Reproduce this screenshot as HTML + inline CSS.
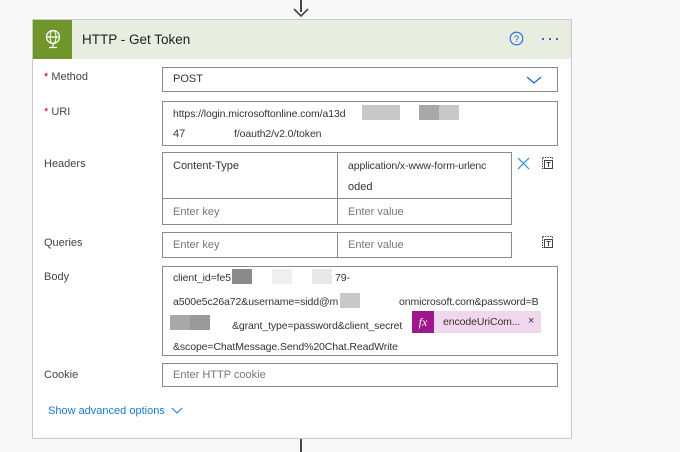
<!DOCTYPE html>
<html><head><meta charset="utf-8"><style>
*{margin:0;padding:0;box-sizing:border-box}
body{width:680px;height:452px;background:#f8f8f8;font-family:"Liberation Sans",sans-serif;font-size:11px;color:#333;position:relative;overflow:hidden}
.a{position:absolute}
.box{position:absolute;border:1px solid #8a8a8a;background:#fff}
.lbl{position:absolute;left:44px;color:#444;font-size:11px}
.req{color:#c00}
.t{position:absolute;white-space:nowrap;color:#333}
.ph{color:#777}
.blk{position:absolute;background:#c8c8c8}
.sm{font-size:10.5px;letter-spacing:-0.1px}
</style></head><body>
<div class="a" style="left:300px;top:0;width:2px;height:12px;background:#444"></div>
<svg class="a" style="left:292px;top:4px" width="18" height="14"><path d="M2 5 L9 12 L16 5" stroke="#444" stroke-width="1.6" fill="none"/></svg>
<div class="a" style="left:300px;top:438px;width:2px;height:14px;background:#444"></div>

<div class="a" style="left:32px;top:19px;width:540px;height:420px;background:#fff;border:1px solid #c8c8c8"></div>
<div class="a" style="left:33px;top:20px;width:538px;height:39px;background:#e8eedf"></div>
<div class="a" style="left:33px;top:20px;width:39px;height:39px;background:#6e962a"></div>
<svg class="a" style="left:43px;top:28px" width="20" height="22"><circle cx="10" cy="9" r="6.5" stroke="#fff" stroke-width="1.3" fill="none"/><ellipse cx="10" cy="9" rx="3" ry="6.5" stroke="#fff" stroke-width="1" fill="none"/><path d="M3.5 9H16.5M10 15.5V19M6 19.5H14" stroke="#fff" stroke-width="1.2"/></svg>
<div class="t" style="left:82px;top:32px;font-size:13.5px;color:#222">HTTP - Get Token</div>
<svg class="a" style="left:509px;top:31px" width="15" height="15"><circle cx="7.5" cy="7.5" r="6.3" stroke="#2266e0" stroke-width="1.1" fill="none"/><text x="7.5" y="11" font-size="9.5" text-anchor="middle" fill="#2266e0" font-family="Liberation Sans">?</text></svg>
<div class="a" style="left:542px;top:38px;width:2px;height:2px;background:#2a6ad0"></div>
<div class="a" style="left:549px;top:38px;width:2px;height:2px;background:#2a6ad0"></div>
<div class="a" style="left:556px;top:38px;width:2px;height:2px;background:#2a6ad0"></div>

<div class="lbl" style="top:71px"><span class="req">* </span>Method</div>
<div class="box" style="left:162px;top:67px;width:396px;height:25px"></div>
<div class="t" style="left:173px;top:73px">POST</div>
<svg class="a" style="left:526px;top:75px" width="16" height="10"><path d="M1 2 L8 8 L15 2" stroke="#2266e0" stroke-width="1.3" fill="none"/></svg>

<div class="lbl" style="top:106px"><span class="req">* </span>URI</div>
<div class="box" style="left:162px;top:101px;width:396px;height:45px"></div>
<div class="t sm" style="left:173px;top:108px">https://login.microsoftonline.com/a13d</div>
<div class="blk" style="left:362px;top:105px;width:38px;height:15px"></div>
<div class="blk" style="left:419px;top:105px;width:20px;height:15px;background:#a8a8a8"></div>
<div class="blk" style="left:439px;top:105px;width:20px;height:15px"></div>
<div class="t" style="left:173px;top:128px">47</div>
<div class="t sm" style="left:234px;top:128px">f/oauth2/v2.0/token</div>

<div class="lbl" style="top:158px">Headers</div>
<div class="box" style="left:162px;top:152px;width:350px;height:73px"></div>
<div class="a" style="left:337px;top:152px;width:1px;height:73px;background:#8a8a8a"></div>
<div class="a" style="left:162px;top:198px;width:350px;height:1px;background:#8a8a8a"></div>
<div class="t" style="left:173px;top:160px">Content-Type</div>
<div class="t sm" style="left:348px;top:160px">application/x-www-form-urlenc</div>
<div class="t" style="left:348px;top:181px">oded</div>
<div class="t ph" style="left:173px;top:206px">Enter key</div>
<div class="t ph" style="left:348px;top:206px">Enter value</div>
<svg class="a" style="left:517px;top:157px" width="13" height="13"><path d="M1 1L12 12M12 1L1 12" stroke="#2a8ae0" stroke-width="1.2"/></svg>
<svg class="a" style="left:541px;top:156px" width="13" height="14"><rect x="1.5" y="1.5" width="10" height="11" stroke="#444" stroke-dasharray="1.5 1" fill="none"/><rect x="3.5" y="4.5" width="8" height="8" stroke="#444" fill="none"/><path d="M5.5 6.5H9.5M7.5 6.5V11" stroke="#444"/></svg>

<div class="lbl" style="top:237px">Queries</div>
<div class="box" style="left:162px;top:232px;width:176px;height:26px"></div>
<div class="box" style="left:337px;top:232px;width:175px;height:26px"></div>
<div class="t ph" style="left:173px;top:239px">Enter key</div>
<div class="t ph" style="left:348px;top:239px">Enter value</div>
<svg class="a" style="left:541px;top:235px" width="13" height="14"><rect x="1.5" y="1.5" width="10" height="11" stroke="#444" stroke-dasharray="1.5 1" fill="none"/><rect x="3.5" y="4.5" width="8" height="8" stroke="#444" fill="none"/><path d="M5.5 6.5H9.5M7.5 6.5V11" stroke="#444"/></svg>

<div class="lbl" style="top:271px">Body</div>
<div class="box" style="left:162px;top:266px;width:396px;height:90px"></div>
<div class="t sm" style="left:173px;top:272px">client_id=fe5</div>
<div class="blk" style="left:232px;top:269px;width:20px;height:15px;background:#8a8a8a"></div>
<div class="blk" style="left:272px;top:269px;width:20px;height:15px;background:#f0f0f0"></div>
<div class="blk" style="left:312px;top:269px;width:20px;height:15px;background:#e8e8e8"></div>
<div class="t sm" style="left:335px;top:272px">79-</div>
<div class="t sm" style="left:173px;top:296px">a500e5c26a72&amp;username=sidd@m</div>
<div class="blk" style="left:340px;top:293px;width:20px;height:15px"></div>
<div class="t sm" style="left:399px;top:296px">onmicrosoft.com&amp;password=B</div>
<div class="blk" style="left:170px;top:315px;width:20px;height:15px;background:#a8a8a8"></div>
<div class="blk" style="left:190px;top:315px;width:20px;height:15px;background:#999"></div>
<div class="t sm" style="left:232px;top:320px">&amp;grant_type=password&amp;client_secret</div>
<div class="a" style="left:412px;top:311px;width:129px;height:22px;background:#f1d7ee"></div>
<div class="a" style="left:412px;top:311px;width:22px;height:22px;background:#a0168c;color:#fff;font-family:'Liberation Serif',serif;font-style:italic;font-size:12px;text-align:center;line-height:22px">fx</div>
<div class="t sm" style="left:443px;top:316px">encodeUriCom...</div>
<div class="t" style="left:528px;top:315px;font-size:11px">×</div>
<div class="t sm" style="left:173px;top:341px">&amp;scope=ChatMessage.Send%20Chat.ReadWrite</div>

<div class="lbl" style="top:369px">Cookie</div>
<div class="box" style="left:162px;top:363px;width:396px;height:24px"></div>
<div class="t ph" style="left:173px;top:369px">Enter HTTP cookie</div>

<div class="t" style="left:48px;top:405px;color:#1a7ad0">Show advanced options</div>
<svg class="a" style="left:171px;top:407px" width="12" height="8"><path d="M1 1L6 6L11 1" stroke="#1a7ad0" stroke-width="1" fill="none"/></svg>
</body></html>
